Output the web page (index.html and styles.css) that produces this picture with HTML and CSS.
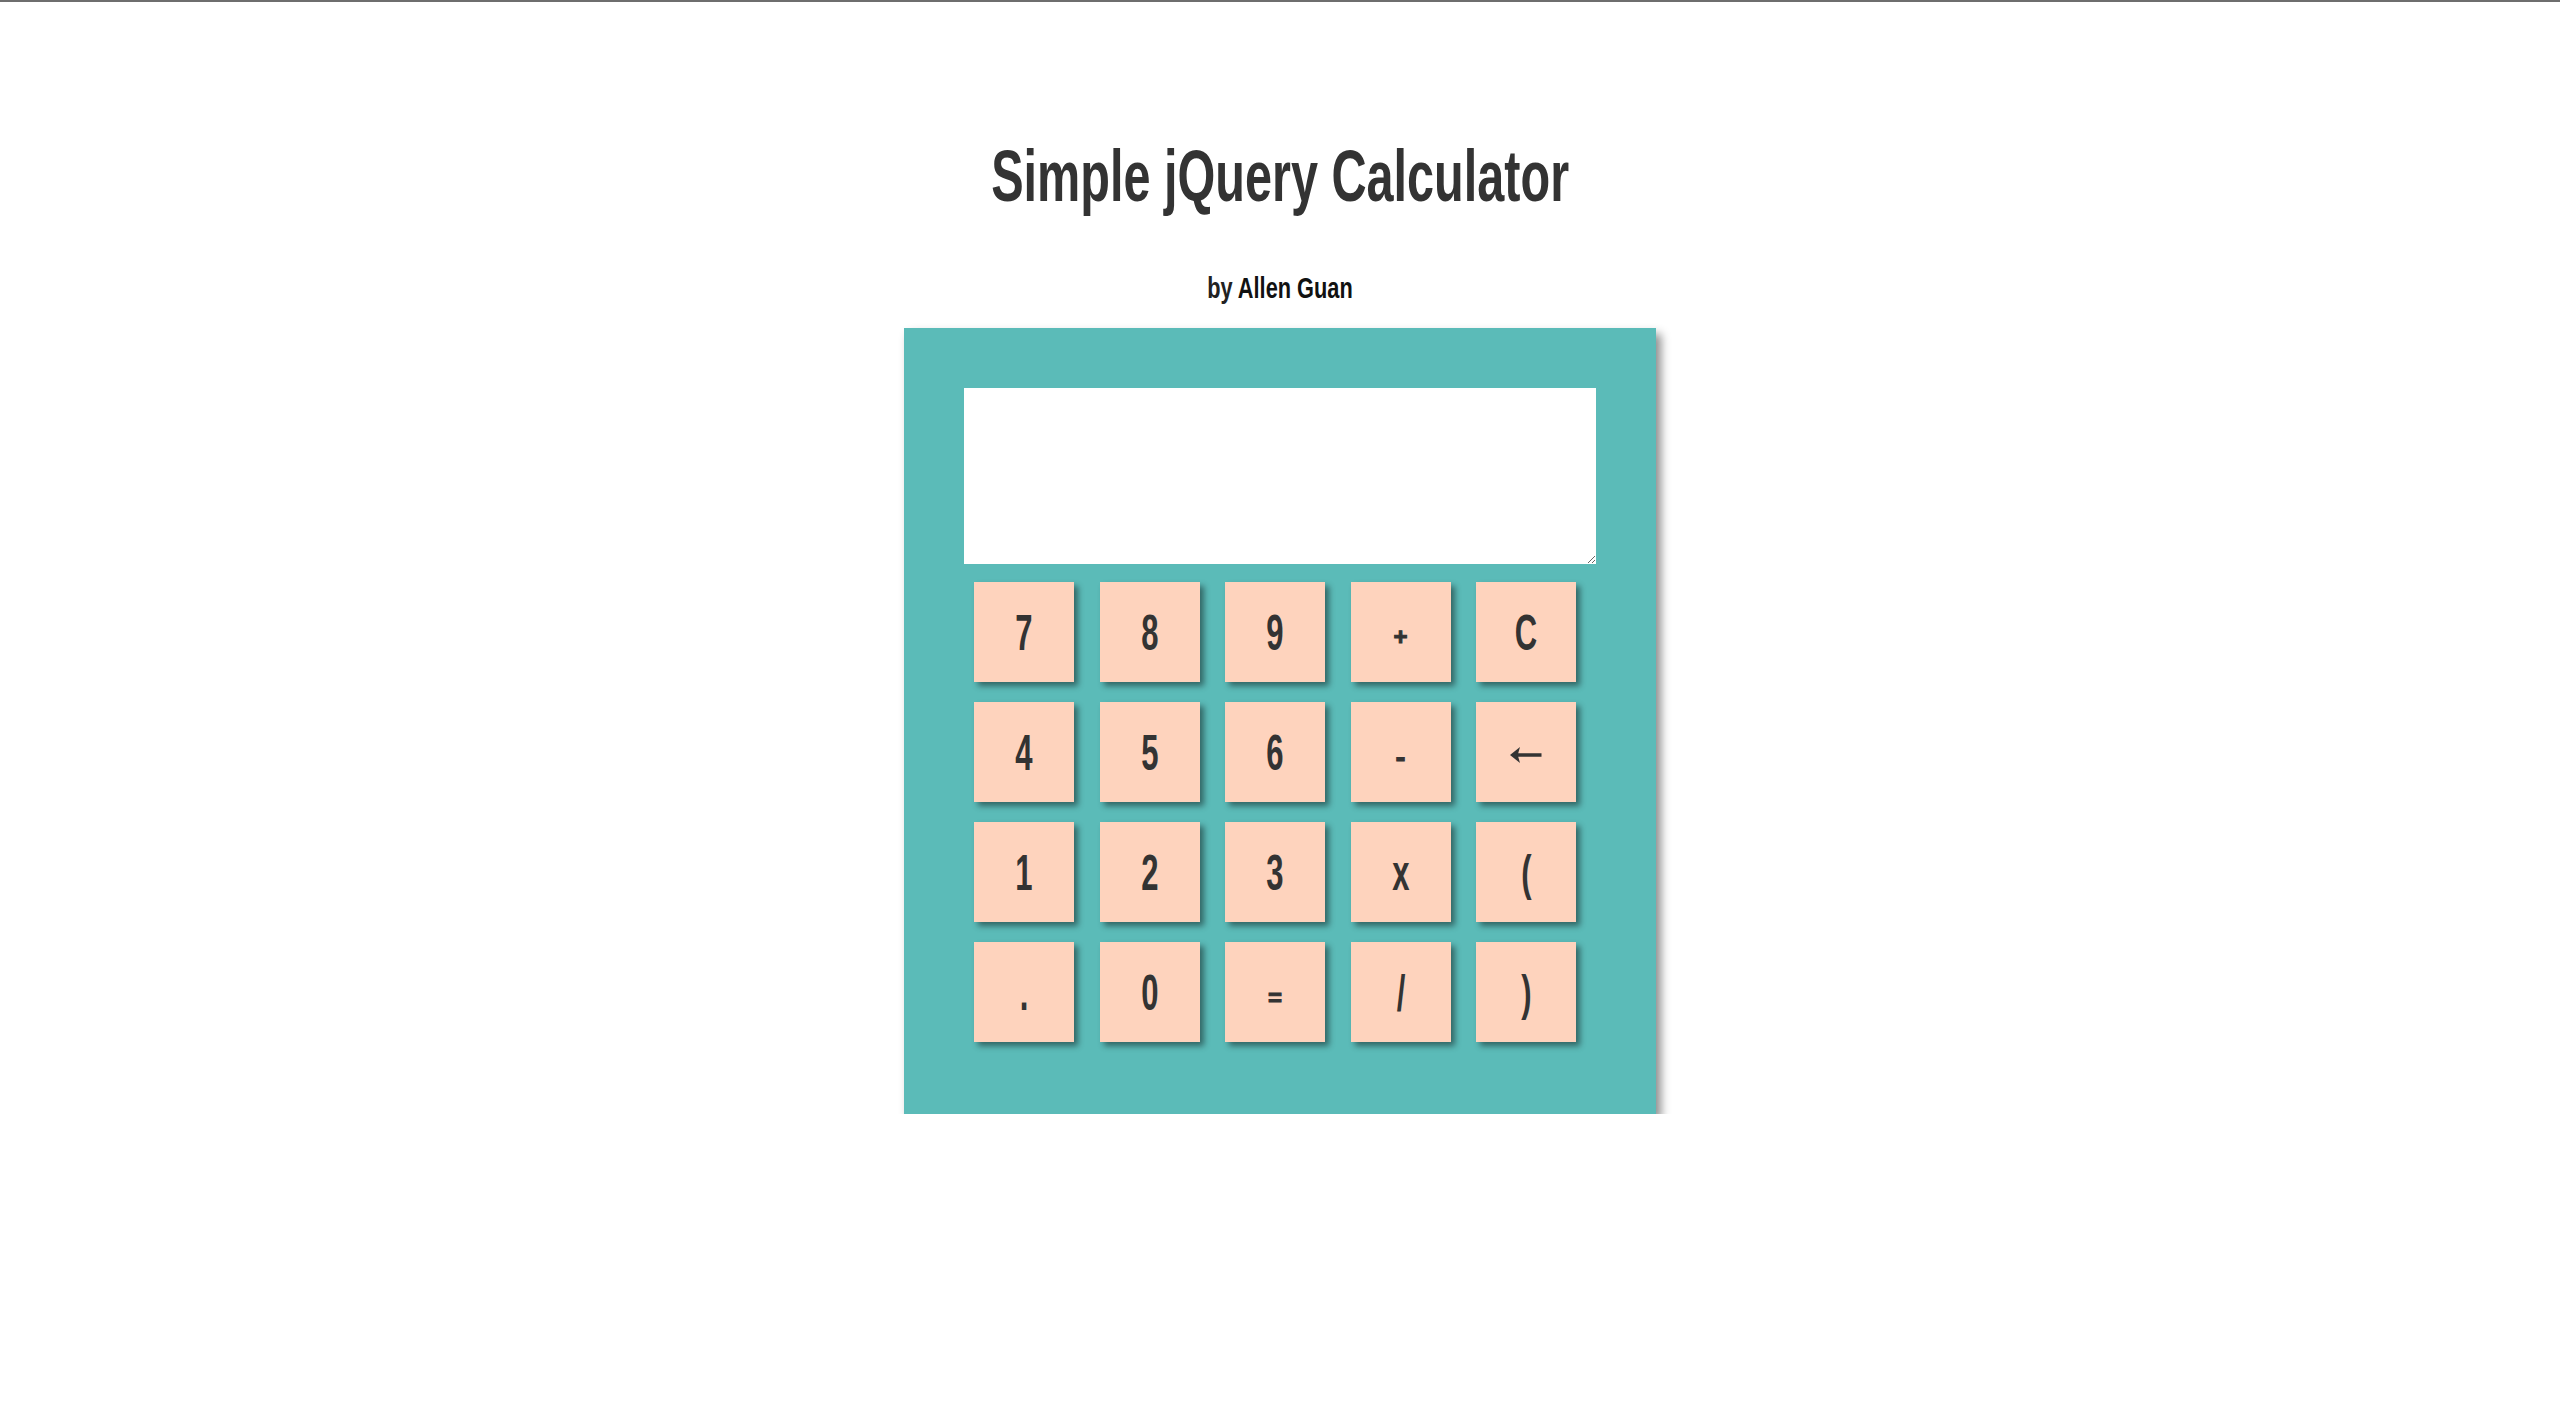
FILE: index.html
```html
<!DOCTYPE html>
<html>
<head>
<meta charset="utf-8">
<title>Simple jQuery Calculator</title>
<link rel="stylesheet" href="styles.css">
</head>
<body>
<div class="topline"></div>
<h1 class="title"><span class="squeeze">Simple jQuery Calculator</span></h1>
<p class="byline"><span class="squeeze-b">by <a class="author">Allen Guan</a></span></p>
<div class="calc">
  <textarea class="screen"></textarea>
  <div class="keys">
    <div class="key"><span class="g">7</span></div>
    <div class="key"><span class="g">8</span></div>
    <div class="key"><span class="g">9</span></div>
    <div class="key"><span class="op op-plus">+</span></div>
    <div class="key"><span class="g">C</span></div>
    <div class="key"><span class="g">4</span></div>
    <div class="key"><span class="g">5</span></div>
    <div class="key"><span class="g">6</span></div>
    <div class="key"><span class="op op-minus">-</span></div>
    <div class="key"><svg class="arrow" width="32" height="16" viewBox="0 0 32 16"><path d="M0 8 L10 0 L8.2 6.3 L31.5 6.3 L31.5 9.7 L8.2 9.7 L10 16 Z" fill="#333"/></svg></div>
    <div class="key"><span class="g">1</span></div>
    <div class="key"><span class="g">2</span></div>
    <div class="key"><span class="g">3</span></div>
    <div class="key"><span class="g">x</span></div>
    <div class="key"><span class="g">(</span></div>
    <div class="key"><span class="g">.</span></div>
    <div class="key"><span class="g">0</span></div>
    <div class="key"><span class="op op-eq">=</span></div>
    <div class="key"><span class="g">/</span></div>
    <div class="key"><span class="g">)</span></div>
  </div>
</div>
</body>
</html>
```
FILE: styles.css
```css
html, body {
  margin: 0;
  padding: 0;
  background: #ffffff;
}
body {
  font-family: "Liberation Sans", Arial, sans-serif;
  color: #333333;
}
.topline {
  height: 2px;
  background: #6e6e6e;
}
.title {
  margin: 0;
  padding-top: 134px;
  height: 80px;
  line-height: 80px;
  font-size: 72px;
  font-weight: 700;
  text-align: center;
  color: #333333;
}
.squeeze {
  display: inline-block;
  transform: scaleX(0.675);
}
.byline {
  margin: 0;
  padding-top: 56px;
  height: 32px;
  line-height: 32px;
  font-size: 29px;
  font-weight: 700;
  text-align: center;
  color: #222222;
}
.squeeze-b {
  display: inline-block;
  transform: scaleX(0.75);
}
.author {
  color: #111111;
}
.calc {
  width: 632px;
  margin: 24px auto 0;
  padding: 60px;
  background: #5bbbb8;
  box-shadow: 5px 6px 9px rgba(0, 0, 0, 0.45);
}
.screen {
  display: block;
  box-sizing: border-box;
  width: 632px;
  height: 176px;
  margin: 0;
  border: none;
  outline: none;
  background: #ffffff;
  font-family: "Liberation Sans", sans-serif;
  font-size: 40px;
  color: #333333;
}
.keys {
  display: grid;
  grid-template-columns: repeat(5, 100px);
  column-gap: 25.5px;
  row-gap: 20px;
  padding: 18px 10px 12px;
}
.key {
  height: 100px;
  background: #fed3bd;
  box-shadow: 4px 4px 6px rgba(0, 0, 0, 0.45);
  display: flex;
  align-items: center;
  justify-content: center;
  color: #333333;
}
.g {
  display: inline-block;
  font-size: 50px;
  line-height: 50px;
  height: 50px;
  font-weight: 700;
  transform: scaleX(0.62);
  margin-top: 2px;
}
.op {
  display: inline-block;
  font-weight: 700;
  -webkit-text-stroke: 1px #333333;
}
.op-plus {
  font-size: 24px;
  line-height: 26px;
  margin-top: 10px;
}
.op-minus {
  font-size: 30px;
  line-height: 32px;
  margin-top: 9px;
}
.op-eq {
  font-size: 24px;
  line-height: 28px;
  margin-top: 12px;
}
.arrow {
  display: block;
  margin-top: 6px;
  margin-left: -1px;
}
```
